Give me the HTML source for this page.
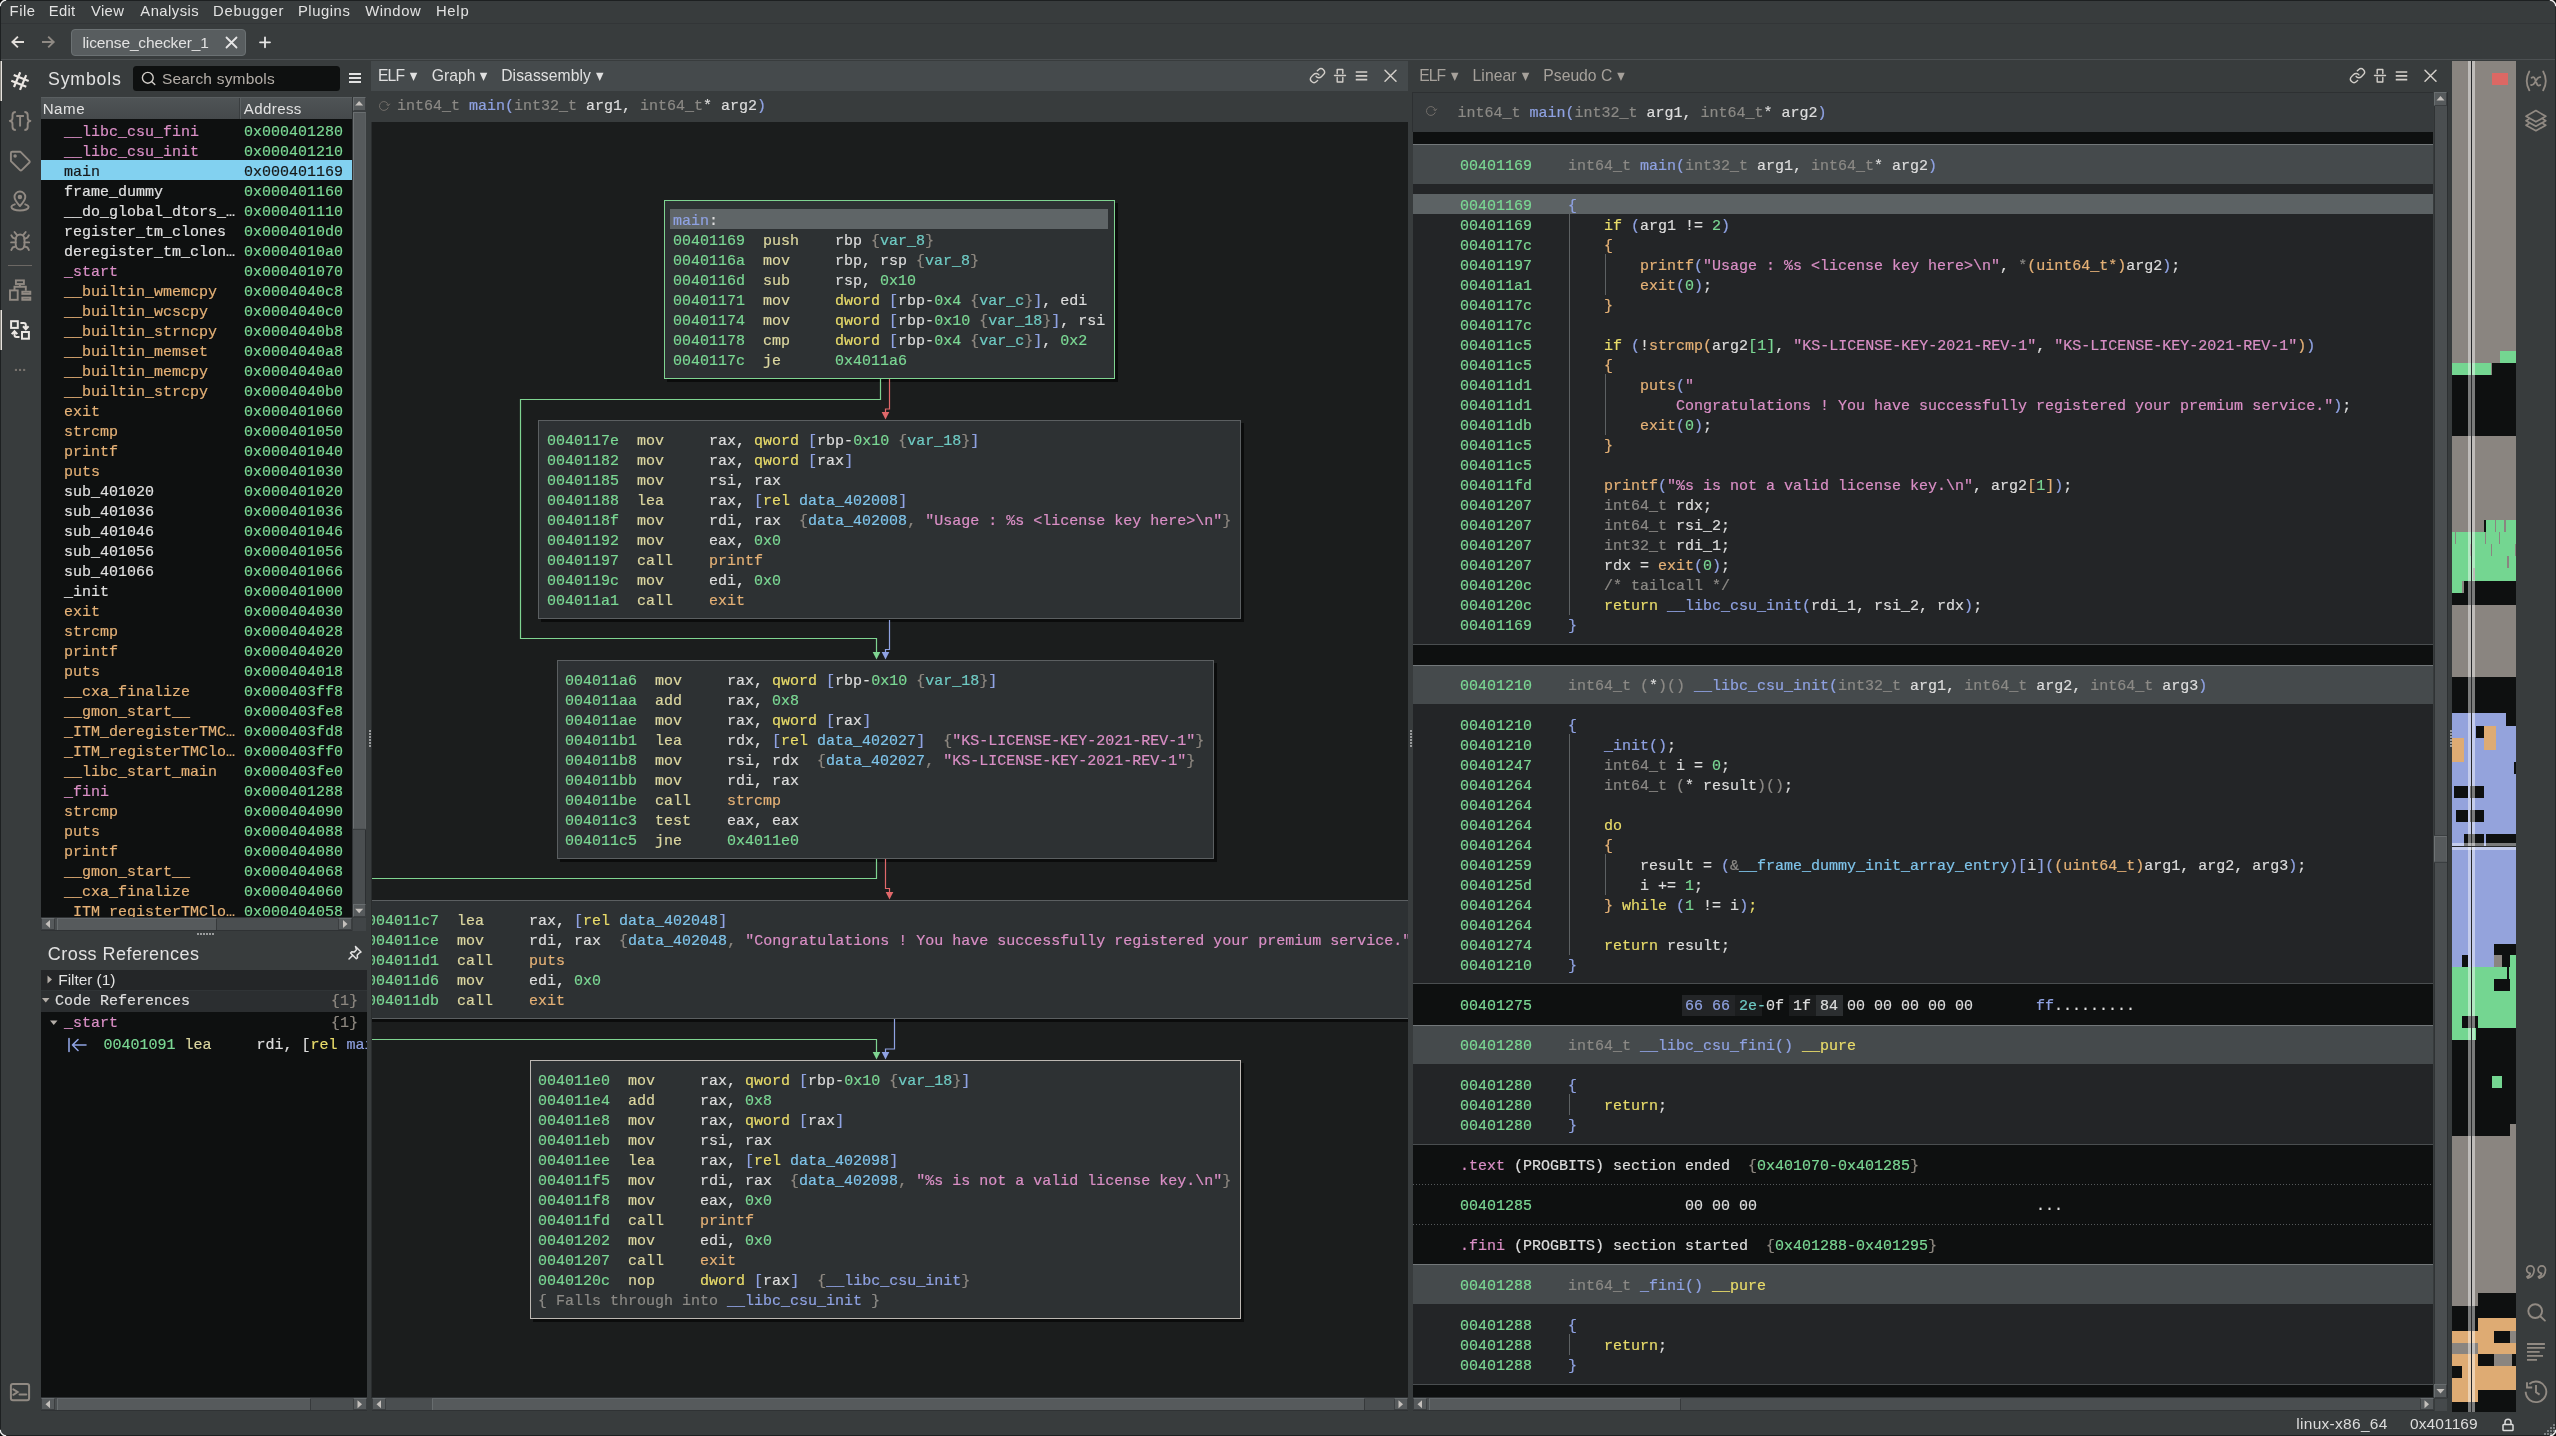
<!DOCTYPE html>
<html lang="en"><head><meta charset="utf-8"><title>license_checker_1 - Binary Ninja</title>
<style>
*{box-sizing:border-box;margin:0;padding:0}
html,body{width:2556px;height:1436px;overflow:hidden;background:#383c3d}
body{position:relative;will-change:transform;font-family:"Liberation Sans","DejaVu Sans",sans-serif;color:#dcdcdc;font-size:16px}
.abs{position:absolute}
.mono,.ln{font-family:"Liberation Mono","DejaVu Sans Mono",monospace;font-size:15px;white-space:pre;line-height:20px}
.ln{position:absolute;height:20px;color:#dddddd;margin-top:2.5px;-webkit-text-stroke:0.2px}
.a{color:#7bd894}.m{color:#dcd7a0}.k{color:#e9dc6a}.b{color:#8fa2e2}.g{color:#8e8880}
.v{color:#6fcbc4}.d{color:#7fc4ea}.s{color:#da8fc6}.i{color:#e5b176}.f{color:#8fa2e2}
.t{color:#8c8a86}.o{color:#e5b176}.gr{color:#7bd894}.c{color:#8c8a86}.w{color:#e0e0e0}.p{color:#da8fc6}
.sb{position:absolute;background:#55595b;border:1px solid #2e3133}
.sbt{position:absolute;background:#575b5d;border:1px solid #45494b}
svg{position:absolute;overflow:visible}
</style></head>
<body>
<!-- menu bar -->
<div class="abs" style="left:0;top:0;width:2556px;height:23px;background:#383c3d"></div>
<div class="abs" style="left:0;top:23px;width:2556px;height:1px;background:#323537"></div>
<div class="abs" style="left:9.58px;top:0.57px;font-size:14.8px;line-height:20px;color:#e2e2e2;white-space:nowrap;letter-spacing:0.541px;">File</div>
<div class="abs" style="left:48.68px;top:0.57px;font-size:14.8px;line-height:20px;color:#e2e2e2;white-space:nowrap;letter-spacing:0.346px;">Edit</div>
<div class="abs" style="left:90.93px;top:0.57px;font-size:14.8px;line-height:20px;color:#e2e2e2;white-space:nowrap;letter-spacing:0.372px;">View</div>
<div class="abs" style="left:140.36px;top:0.57px;font-size:14.8px;line-height:20px;color:#e2e2e2;white-space:nowrap;letter-spacing:0.452px;">Analysis</div>
<div class="abs" style="left:212.98px;top:0.57px;font-size:14.8px;line-height:20px;color:#e2e2e2;white-space:nowrap;letter-spacing:0.776px;">Debugger</div>
<div class="abs" style="left:297.88px;top:0.57px;font-size:14.8px;line-height:20px;color:#e2e2e2;white-space:nowrap;letter-spacing:0.566px;">Plugins</div>
<div class="abs" style="left:365.13px;top:0.57px;font-size:14.8px;line-height:20px;color:#e2e2e2;white-space:nowrap;letter-spacing:0.577px;">Window</div>
<div class="abs" style="left:435.88px;top:0.57px;font-size:14.8px;line-height:20px;color:#e2e2e2;white-space:nowrap;letter-spacing:0.766px;">Help</div>
<!-- tab bar -->
<div class="abs" style="left:0;top:59px;width:2556px;height:1px;background:#4c5052"></div>
<div class="abs" style="left:71px;top:29px;width:175px;height:27px;background:#585d5f;border:1px solid #6b7173;border-radius:4px"></div>
<div class="abs" style="left:82.55px;top:32.53px;font-size:15.5px;line-height:20px;color:#e2e2e2;white-space:nowrap;letter-spacing:-0.131px;">license_checker_1</div>
<svg style="left:0;top:24px" width="300" height="36" viewBox="0 24 300 36" fill="none" stroke-linecap="round" stroke-linejoin="round"><path d="M24 42H12.800M17.900 36.600l-5.500 5.400 5.500 5.400" stroke="#e2deda" stroke-width="1.900" stroke-linecap="butt" stroke-linejoin="miter"/><path d="M42 42h11.200M48.200 36.600l5.500 5.400-5.500 5.400" stroke="#8f8a84" stroke-width="1.900" stroke-linecap="butt" stroke-linejoin="miter"/><path d="M226.5 37.5l10 10M236.5 37.5l-10 10" stroke="#e6e6e6" stroke-width="1.8"/><path d="M260 42.3h10M265 37.3v10" stroke="#e6e6e6" stroke-width="1.8"/></svg>
<!-- left icon strip -->
<div class="abs" style="left:0;top:61px;width:2px;height:40px;background:#e8e4e0;border-left:1px solid #8a8882;z-index:3"></div>
<div class="abs" style="left:0;top:310px;width:2px;height:40px;background:#e8e4e0;border-left:1px solid #8a8882;z-index:3"></div>
<div class="abs" style="left:8px;top:265px;width:24px;height:1px;background:#6c6864"></div>
<svg style="left:0;top:60px" width="41" height="1353" viewBox="0 60 41 1353" fill="none" stroke-linecap="round" stroke-linejoin="round">
<g stroke="#ebe7e3" stroke-width="2.200" stroke-linecap="butt"><path d="M13.700 74.900l15 6M11.300 80.800l15 6M20.200 72.200l-6.200 14.800M26.200 75.100l-6.200 14.800"/></g>
<g stroke="#918a83" stroke-width="1.900"><path d="M15.800 112c-2.600 0-3.300 .8-3.300 3v3c0 1.900-.9 2.800-2.700 3c1.800 .2 2.700 1.100 2.700 3v3c0 2.200 .7 3 3.300 3M24.400 112c2.600 0 3.300 .8 3.300 3v3c0 1.900 .9 2.800 2.700 3c-1.800 .2-2.700 1.100-2.700 3v3c0 2.200-.7 3-3.300 3M16.300 116h7.600M20.100 116v10.600" stroke-linecap="butt"/></g>
<g stroke="#918a83" stroke-width="1.900"><path d="M10.900 152.900a1.200 1.200 0 0 1 1.200-1.200h8.200l9.100 9.100a1.200 1.200 0 0 1 0 1.700l-7.700 7.700a1.200 1.200 0 0 1-1.700 0l-9.100-9.100z"/><circle cx="15.100" cy="156" r=".8" fill="#918a83"/></g>
<g stroke="#918a83" stroke-width="1.900"><path d="M19.900 206c-4-4.500-5.400-6.900-5.400-9.100a5.400 5.400 0 0 1 10.800 0c0 2.200-1.400 4.600-5.400 9.100z"/><circle cx="19.900" cy="196.900" r="1.300" fill="#918a83"/><path d="M14.800 204.300c-2.200 .6-3.400 1.600-3.400 2.700c0 2 3.800 3.500 8.600 3.500s8.600-1.500 8.600-3.500c0-1.100-1.200-2.100-3.400-2.700"/></g>
<g stroke="#918a83" stroke-width="1.900"><path d="M15.700 239.500a4.400 5 0 0 1 8.800 0v5a4.400 5 0 0 1-8.800 0z"/><path d="M15.700 242.400h-4.600M24.500 242.400h4.600M15.900 246.300l-3.200 1.200-1.400 2.400M24.300 246.300l3.200 1.200 1.400 2.400M15.900 238.800l-3.200-1.200-1.400-2.400M24.300 238.800l3.200-1.200 1.400-2.400M17 235.200l-2.500-3.200M23.200 235.200l2.500-3.200"/></g>
<g stroke="#918a83" stroke-width="1.900" stroke-linejoin="miter" stroke-linecap="butt"><rect x="15.900" y="280.400" width="8" height="3.600"/><rect x="10" y="290.400" width="7.700" height="9.400"/><rect x="22.300" y="291.700" width="8" height="2.200"/><rect x="22.300" y="297.600" width="8" height="2.200"/><path d="M19.900 284.900v2.700M14.500 290v-3.300h11.300v4"/></g>
<g stroke="#ebe7e3" stroke-width="2" stroke-linejoin="miter" stroke-linecap="butt"><rect x="11.100" y="321.200" width="6.700" height="6.700"/><rect x="22" y="332" width="6.900" height="6.700"/><path d="M20.400 322.900h3.400q2 0 2 2v4.500M23 326.300l2.800 2.900 2.800-2.900M19.500 336.900h-3q-2 0-2-2v-3.800M11.700 334.100l2.800-2.900 2.800 2.900"/></g>
<g fill="#77726d" stroke="none"><rect x="14.900" y="368.900" width="2.100" height="2.100"/><rect x="19" y="368.900" width="2.100" height="2.100"/><rect x="23.100" y="368.900" width="2.100" height="2.100"/></g>
<g stroke="#918a83" stroke-width="2"><rect x="10.900" y="1383.900" width="18.200" height="16.300" rx="2"/><path d="M13.300 1389.300l4.300 2.700-4.300 2.800M19.500 1394.600h6.800" stroke-linejoin="miter"/></g>
</svg>
<!-- right icon strip -->
<svg style="left:2516px;top:60px" width="40" height="1353" viewBox="2516 60 40 1353" fill="none" stroke-linecap="round" stroke-linejoin="round">
<g stroke="#918a83" stroke-width="1.800"><path d="M2529.300 71.500c-3.300 6-3.300 12.800 0 18.800M2543.200 71.500c3.300 6 3.300 12.800 0 18.800"/><path d="M2531.600 77.800c1.700-1.200 2.700-.6 3.400 1.200l1.900 4.800c.7 1.800 1.700 2.400 3.400 1.200M2540.300 77.200c-1.700-.3-2.600 .6-3.600 2.300l-2 3.200c-1 1.700-1.900 2.600-3.600 2.300"/></g>
<g stroke="#918a83" stroke-width="1.700" stroke-linejoin="round"><path d="M2535.900 110.600l9.900 5.700-9.900 5.500-9.900-5.500zM2528.600 119.300l-2.600 1.400 9.900 5.500 9.900-5.500-2.600-1.400M2528.600 123.800l-2.600 1.400 9.900 5.500 9.900-5.500-2.600-1.400"/></g>
<g stroke="#918a83" stroke-width="1.700"><path d="M2530.2 1273.300a3.700 3.700 0 1 1 3.900-3.700c0 4.300-2 7.300-6.300 8.500l-.8-1.300c2.300-1 3.300-2 3.200-3.500zM2541.6 1273.300a3.700 3.700 0 1 1 3.900-3.700c0 4.300-2 7.300-6.300 8.500l-.8-1.300c2.300-1 3.300-2 3.200-3.500z"/></g>
<g stroke="#918a83" stroke-width="1.900"><circle cx="2535.200" cy="1311.100" r="6.900"/><path d="M2540.300 1316.300l4.600 4.300"/></g>
<g stroke="#918a83" stroke-width="1.900" stroke-linecap="butt"><path d="M2527 1344h17.900M2527 1347.900h17.900M2527 1351.900h12.700M2527 1355.900h16M2527 1359.900h10"/></g>
<g stroke="#918a83" stroke-width="1.900" stroke-linecap="butt" stroke-linejoin="miter"><path d="M2525.700 1391.800a10.300 10.300 0 1 0 3.600-7.800"/><path d="M2527 1382.300v5.200h5.200M2536 1385v7.200l3.600 2.400"/></g>
</svg>
<div class="abs" style="left:2555px;top:0;width:1px;height:1436px;background:#25282a"></div>
<!-- status bar -->
<div class="abs" style="left:2296.25px;top:1414.43px;font-size:15.5px;line-height:20px;color:#dcdcdc;white-space:nowrap;letter-spacing:0.290px;">linux-x86_64</div>
<div class="abs" style="left:2410.02px;top:1414.43px;font-size:15.5px;line-height:20px;color:#dcdcdc;white-space:nowrap;letter-spacing:0.108px;">0x401169</div>
<svg style="left:2500px;top:1414px" width="16" height="20" viewBox="2500 1414 16 20" fill="none" stroke="#dcdcdc" stroke-width="1.500"><rect x="2503" y="1424.500" width="10" height="6" rx="0.800"/><path d="M2505 1424.500v-2.300a3 3 0 0 1 6 0v2.300"/></svg>
<div class="abs" style="left:0;top:0;width:1px;height:1436px;background:#1d2021"></div>
<div class="abs" style="left:0;top:1435px;width:2556px;height:1px;background:#1d2021"></div>
<div class="abs" style="left:0;top:0;width:2556px;height:1px;background:#1d2021;z-index:4"></div>
<svg style="left:0;top:0;z-index:5" width="2556" height="1436" viewBox="0 0 2556 1436"><g fill="#7b7f81"><rect x="2553" y="1424" width="2" height="2"/><rect x="2553" y="1427" width="2" height="2"/><rect x="2550" y="1427" width="2" height="2"/><rect x="2553" y="1430" width="2" height="2"/><rect x="2550" y="1430" width="2" height="2"/><rect x="2547" y="1430" width="2" height="2"/><rect x="2553" y="1433" width="2" height="2"/><rect x="2550" y="1433" width="2" height="2"/><rect x="2547" y="1433" width="2" height="2"/><rect x="2544" y="1433" width="2" height="2"/></g><g transform="translate(0 0) scale(1 1)"><path d="M0 0H6.500A6.500 6.500 0 0 0 0 6.500Z" fill="#0a0a0a"/><path d="M6.200 0.200A6 6 0 0 0 0.200 6.200" fill="none" stroke="#f2f2f2" stroke-width="1.300"/></g><g transform="translate(2556 0) scale(-1 1)"><path d="M0 0H6.500A6.500 6.500 0 0 0 0 6.500Z" fill="#0a0a0a"/><path d="M6.200 0.200A6 6 0 0 0 0.200 6.200" fill="none" stroke="#f2f2f2" stroke-width="1.300"/></g><g transform="translate(0 1436) scale(1 -1)"><path d="M0 0H6.500A6.500 6.500 0 0 0 0 6.500Z" fill="#0a0a0a"/><path d="M6.200 0.200A6 6 0 0 0 0.200 6.200" fill="none" stroke="#f2f2f2" stroke-width="1.300"/></g><g transform="translate(2556 1436) scale(-1 -1)"><path d="M0 0H6.500A6.500 6.500 0 0 0 0 6.500Z" fill="#0a0a0a"/><path d="M6.200 0.200A6 6 0 0 0 0.200 6.200" fill="none" stroke="#f2f2f2" stroke-width="1.300"/></g></svg>
<!-- symbols panel -->
<div class="abs" style="left:48.05px;top:68.83px;font-size:17.8px;line-height:20px;color:#e2e2e2;white-space:nowrap;letter-spacing:0.768px;">Symbols</div>
<div class="abs" style="left:133px;top:65.800px;width:207px;height:24.900px;background:#0e1010;border-radius:3.500px"></div>
<svg style="left:140px;top:68px" width="20" height="20" viewBox="140 68 20 20" fill="none" stroke="#d2cec9" stroke-width="1.400" stroke-linecap="round"><circle cx="147.800" cy="77.800" r="5.400"/><path d="M151.800 81.700l3 2.900"/></svg>
<div class="abs" style="left:161.90px;top:68.63px;font-size:15.5px;line-height:20px;color:#b4aea8;white-space:nowrap;letter-spacing:0.197px;">Search symbols</div>
<svg style="left:348px;top:70px" width="14" height="16" viewBox="348 70 14 16" stroke="#e2e2e2" stroke-width="1.900"><path d="M349 74h12M349 78h12M349 82h12"/></svg>
<div class="abs" style="left:41px;top:97px;width:311px;height:22px;background:linear-gradient(#4f5456,#45494b);border-top:1px solid #5a5f61"></div>
<div class="abs" style="left:239px;top:98px;width:1px;height:21px;background:#3a3e40"></div>
<div class="abs" style="left:240px;top:98px;width:1px;height:21px;background:#5c6163"></div>
<div class="abs" style="left:42.65px;top:98.77px;font-size:15.1px;line-height:20px;color:#e2e2e2;white-space:nowrap;letter-spacing:0.569px;">Name</div>
<div class="abs" style="left:243.86px;top:98.77px;font-size:15.1px;line-height:20px;color:#e2e2e2;white-space:nowrap;letter-spacing:0.348px;">Address</div>
<div class="abs" style="left:41px;top:119px;width:311px;height:798px;background:#0e1010;overflow:hidden">
<div class="ln p" style="left:23px;top:1px">__libc_csu_fini</div><div class="ln a" style="left:203px;top:1px">0x000401280</div>
<div class="ln p" style="left:23px;top:21px">__libc_csu_init</div><div class="ln a" style="left:203px;top:21px">0x000401210</div>
<div class="abs" style="left:0;top:41px;width:312px;height:20px;background:#82d1f0"></div><div class="ln" style="left:23px;top:41px;color:#16181a">main</div><div class="ln" style="left:203px;top:41px;color:#16181a">0x000401169</div>
<div class="ln w" style="left:23px;top:61px">frame_dummy</div><div class="ln a" style="left:203px;top:61px">0x000401160</div>
<div class="ln w" style="left:23px;top:81px">__do_global_dtors_…</div><div class="ln a" style="left:203px;top:81px">0x000401110</div>
<div class="ln w" style="left:23px;top:101px">register_tm_clones</div><div class="ln a" style="left:203px;top:101px">0x0004010d0</div>
<div class="ln w" style="left:23px;top:121px">deregister_tm_clon…</div><div class="ln a" style="left:203px;top:121px">0x0004010a0</div>
<div class="ln p" style="left:23px;top:141px">_start</div><div class="ln a" style="left:203px;top:141px">0x000401070</div>
<div class="ln i" style="left:23px;top:161px">__builtin_wmemcpy</div><div class="ln a" style="left:203px;top:161px">0x0004040c8</div>
<div class="ln i" style="left:23px;top:181px">__builtin_wcscpy</div><div class="ln a" style="left:203px;top:181px">0x0004040c0</div>
<div class="ln i" style="left:23px;top:201px">__builtin_strncpy</div><div class="ln a" style="left:203px;top:201px">0x0004040b8</div>
<div class="ln i" style="left:23px;top:221px">__builtin_memset</div><div class="ln a" style="left:203px;top:221px">0x0004040a8</div>
<div class="ln i" style="left:23px;top:241px">__builtin_memcpy</div><div class="ln a" style="left:203px;top:241px">0x0004040a0</div>
<div class="ln i" style="left:23px;top:261px">__builtin_strcpy</div><div class="ln a" style="left:203px;top:261px">0x0004040b0</div>
<div class="ln i" style="left:23px;top:281px">exit</div><div class="ln a" style="left:203px;top:281px">0x000401060</div>
<div class="ln i" style="left:23px;top:301px">strcmp</div><div class="ln a" style="left:203px;top:301px">0x000401050</div>
<div class="ln i" style="left:23px;top:321px">printf</div><div class="ln a" style="left:203px;top:321px">0x000401040</div>
<div class="ln i" style="left:23px;top:341px">puts</div><div class="ln a" style="left:203px;top:341px">0x000401030</div>
<div class="ln w" style="left:23px;top:361px">sub_401020</div><div class="ln a" style="left:203px;top:361px">0x000401020</div>
<div class="ln w" style="left:23px;top:381px">sub_401036</div><div class="ln a" style="left:203px;top:381px">0x000401036</div>
<div class="ln w" style="left:23px;top:401px">sub_401046</div><div class="ln a" style="left:203px;top:401px">0x000401046</div>
<div class="ln w" style="left:23px;top:421px">sub_401056</div><div class="ln a" style="left:203px;top:421px">0x000401056</div>
<div class="ln w" style="left:23px;top:441px">sub_401066</div><div class="ln a" style="left:203px;top:441px">0x000401066</div>
<div class="ln w" style="left:23px;top:461px">_init</div><div class="ln a" style="left:203px;top:461px">0x000401000</div>
<div class="ln i" style="left:23px;top:481px">exit</div><div class="ln a" style="left:203px;top:481px">0x000404030</div>
<div class="ln i" style="left:23px;top:501px">strcmp</div><div class="ln a" style="left:203px;top:501px">0x000404028</div>
<div class="ln i" style="left:23px;top:521px">printf</div><div class="ln a" style="left:203px;top:521px">0x000404020</div>
<div class="ln i" style="left:23px;top:541px">puts</div><div class="ln a" style="left:203px;top:541px">0x000404018</div>
<div class="ln i" style="left:23px;top:561px">__cxa_finalize</div><div class="ln a" style="left:203px;top:561px">0x000403ff8</div>
<div class="ln i" style="left:23px;top:581px">__gmon_start__</div><div class="ln a" style="left:203px;top:581px">0x000403fe8</div>
<div class="ln i" style="left:23px;top:601px">_ITM_deregisterTMC…</div><div class="ln a" style="left:203px;top:601px">0x000403fd8</div>
<div class="ln i" style="left:23px;top:621px">_ITM_registerTMClo…</div><div class="ln a" style="left:203px;top:621px">0x000403ff0</div>
<div class="ln i" style="left:23px;top:641px">__libc_start_main</div><div class="ln a" style="left:203px;top:641px">0x000403fe0</div>
<div class="ln p" style="left:23px;top:661px">_fini</div><div class="ln a" style="left:203px;top:661px">0x000401288</div>
<div class="ln i" style="left:23px;top:681px">strcmp</div><div class="ln a" style="left:203px;top:681px">0x000404090</div>
<div class="ln i" style="left:23px;top:701px">puts</div><div class="ln a" style="left:203px;top:701px">0x000404088</div>
<div class="ln i" style="left:23px;top:721px">printf</div><div class="ln a" style="left:203px;top:721px">0x000404080</div>
<div class="ln i" style="left:23px;top:741px">__gmon_start__</div><div class="ln a" style="left:203px;top:741px">0x000404068</div>
<div class="ln i" style="left:23px;top:761px">__cxa_finalize</div><div class="ln a" style="left:203px;top:761px">0x000404060</div>
<div class="ln i" style="left:23px;top:781px">_ITM_registerTMClo…</div><div class="ln a" style="left:203px;top:781px">0x000404058</div>
</div>
<div class="abs" style="left:352px;top:97px;width:14.3px;height:820.2px;background:#4a4e50;border-left:1px solid #303335;border-right:1px solid #2c2f31"></div>
<div class="abs" style="left:352.8px;top:111.5px;width:12.9px;height:717px;background:#565a5c;border-left:1px solid #6e7274;border-right:1px solid #5c6062;border-top:1px solid #6a6e70;border-bottom:1px solid #505456;box-shadow:0 -1px 0 #3a3e40,0 1px 0 #3a3e40"></div>
<div class="abs" style="left:352.8px;top:97px;width:12.9px;height:13.500px;background:#565a5c;border:1px solid #3b3e40;border-top-color:#686d6f;border-left-color:#686d6f"></div>
<svg style="left:0;top:0" width="1" height="1"><polygon points="359.15,101 355.15,105.5 363.15,105.5" fill="#c4c0bc"/></svg>
<div class="abs" style="left:352.8px;top:903.7px;width:12.9px;height:13.500px;background:#565a5c;border:1px solid #3b3e40;border-top-color:#686d6f;border-left-color:#686d6f"></div>
<svg style="left:0;top:0" width="1" height="1"><polygon points="359.15,913.2 355.15,908.7 363.15,908.7" fill="#c4c0bc"/></svg>
<div class="abs" style="left:41px;top:916.6px;width:311px;height:14.6px;background:#4a4e50;border-top:1px solid #2f3234;border-bottom:1px solid #2f3234"></div>
<div class="abs" style="left:56.5px;top:917.6px;width:160.5px;height:12.6px;background:#565a5c;border-left:1px solid #686d6f;border-right:1px solid #36393b;border-top:1px solid #62676a"></div>
<div class="abs" style="left:41px;top:917.6px;width:14px;height:12.6px;background:#565a5c;border:1px solid #3b3e40;border-top-color:#686d6f"></div>
<svg style="left:0;top:0" width="1" height="1"><polygon points="45.5,923.9 50,919.9 50,927.9" fill="#c4c0bc"/></svg>
<div class="abs" style="left:338px;top:917.6px;width:14px;height:12.6px;background:#565a5c;border:1px solid #3b3e40;border-top-color:#686d6f"></div>
<svg style="left:0;top:0" width="1" height="1"><polygon points="347.5,923.9 343,919.9 343,927.9" fill="#c4c0bc"/></svg>
<div class="abs" style="left:353px;top:917.600px;width:13px;height:13.400px;background:#414547"></div>
<div class="abs" style="left:197px;top:933px;width:17px;height:2px;background:repeating-linear-gradient(90deg,#9a9c9d 0 2px,transparent 2px 3px)"></div>
<div class="abs" style="left:369px;top:730px;width:2px;height:17px;background:repeating-linear-gradient(#9a9c9d 0 2px,transparent 2px 3px)"></div>
<div class="abs" style="left:1410px;top:730px;width:2px;height:17px;background:repeating-linear-gradient(#9a9c9d 0 2px,transparent 2px 3px)"></div>
<!-- cross references -->
<div class="abs" style="left:47.70px;top:943.56px;font-size:18px;line-height:20px;color:#e2e2e2;white-space:nowrap;letter-spacing:0.479px;">Cross References</div>
<svg style="left:346px;top:944px" width="18" height="18" viewBox="346 944 18 18" fill="none" stroke="#e2e2e2" stroke-width="1.500" stroke-linejoin="round" stroke-linecap="round"><path d="M355.500 946.500l5.500 5.500-1.500 .8-2.300 2.300 .3 2.500-1.200 1.200-5.800-5.800 1.200-1.200 2.500 .3 2.300-2.300zM352.500 955.500l-3.500 3.500"/></svg>
<div class="abs" style="left:41px;top:970px;width:325.500px;height:20px;background:#242628"></div>
<div class="abs" style="left:41px;top:990px;width:325.500px;height:22px;background:#2b2e30;border-top:1px solid #303436"></div>
<div class="abs" style="left:41px;top:1012px;width:325.500px;height:385px;background:#0e1010"></div>
<svg style="left:0;top:0" width="1" height="1"><polygon points="47.500,975.500 52,979.500 47.500,983.500" fill="#b4aea8"/><polygon points="42,998 49.500,998 45.750,1002.500" fill="#b4aea8"/><polygon points="50,1020.500 57.500,1020.500 53.750,1025" fill="#b4aea8"/></svg>
<div class="abs" style="left:58.32px;top:969.73px;font-size:15.5px;line-height:20px;color:#e2e2e2;white-space:nowrap;letter-spacing:-0.066px;">Filter (1)</div>
<div class="ln" style="left:55px;top:989.500px">Code References</div><div class="ln g" style="left:331px;top:989.500px">{1}</div>
<div class="ln p" style="left:64px;top:1011.500px">_start</div><div class="ln g" style="left:331px;top:1011.500px">{1}</div>
<svg style="left:66px;top:1036px" width="22" height="18" viewBox="66 1036 22 18" fill="none" stroke="#8fa2e2" stroke-width="1.600" stroke-linecap="round" stroke-linejoin="round"><path d="M69 1038.500v13M86 1045H72.500M78 1039.500l-5.500 5.500 5.500 5.500"/></svg>
<div class="abs" style="left:41px;top:1034px;width:325.500px;height:22px;overflow:hidden"><div class="ln" style="left:62.500px;top:-0.500px"><span class="a">00401091</span> <span class="m">lea</span>     rdi, [<span class="k">rel</span> <span class="f">main</span><span class="b">]</span></div></div>
<div class="abs" style="left:41px;top:1397.2px;width:325.5px;height:14.2px;background:#4a4e50;border-top:1px solid #2f3234;border-bottom:1px solid #2f3234"></div>
<div class="abs" style="left:56.5px;top:1398.2px;width:254.5px;height:12.2px;background:#565a5c;border-left:1px solid #686d6f;border-right:1px solid #36393b;border-top:1px solid #62676a"></div>
<div class="abs" style="left:41px;top:1398.2px;width:14px;height:12.2px;background:#565a5c;border:1px solid #3b3e40;border-top-color:#686d6f"></div>
<svg style="left:0;top:0" width="1" height="1"><polygon points="45.5,1404.3 50,1400.3 50,1408.3" fill="#c4c0bc"/></svg>
<div class="abs" style="left:352.5px;top:1398.2px;width:14px;height:12.2px;background:#565a5c;border:1px solid #3b3e40;border-top-color:#686d6f"></div>
<svg style="left:0;top:0" width="1" height="1"><polygon points="362,1404.3 357.5,1400.3 357.5,1408.3" fill="#c4c0bc"/></svg>
<!-- graph pane -->
<div class="abs" style="left:371px;top:61px;width:1036.5px;height:29.700px;background:#454a4c"></div>
<div class="abs" style="left:378.10px;top:65.66px;font-size:15.7px;line-height:20px;color:#e0e0e0;white-space:nowrap;letter-spacing:-0.943px;">ELF</div>
<div class="abs" style="left:431.81px;top:65.66px;font-size:15.7px;line-height:20px;color:#e0e0e0;white-space:nowrap;letter-spacing:0.015px;">Graph</div>
<div class="abs" style="left:501.20px;top:65.66px;font-size:15.7px;line-height:20px;color:#e0e0e0;white-space:nowrap;letter-spacing:0.085px;">Disassembly</div>
<svg style="left:0;top:62px" width="1" height="1" viewBox="0 62 1 1" fill="#e0e0e0"><polygon points="409.8,72.800 417.3,72.800 413.55,80.900"/><polygon points="479.8,72.800 487.3,72.800 483.55,80.900"/><polygon points="596,72.800 603.5,72.800 599.75,80.900"/></svg>
<svg style="left:0;top:62px" width="1" height="1" viewBox="0 62 1 1" fill="none" stroke="#d2cec9" stroke-width="1.400" stroke-linecap="round" stroke-linejoin="round"><g transform="translate(1309.1 67.200) scale(0.700)" stroke-width="2"><path d="M10 13a5 5 0 0 0 7.540 .540l3-3a5 5 0 0 0-7.070-7.070l-1.720 1.710"/><path d="M14 11a5 5 0 0 0-7.540-.540l-3 3a5 5 0 0 0 7.070 7.070l1.710-1.710"/></g><path d="M1337.2 69.500h5.600v4M1337.2 73.500v-4M1334.5 75.500h11M1337.2 77.500v4.500h5.600v-4.500"/><path d="M1355.75 72h11.500M1355.75 75.800h11.500M1355.75 79.600h11.500" stroke-width="1.700" stroke-linecap="butt"/><path d="M1385 70.300l11 11M1396 70.300l-11 11" stroke-width="1.500"/></svg>
<svg style="left:376.5px;top:99px" width="14" height="14" viewBox="-7 -7 14 14" fill="none" stroke="#716d69" stroke-width="1" stroke-linecap="round" stroke-linejoin="round"><path d="M4.400 -0.800a4.500 4.500 0 1 0 -.3 2.600M2.800 -1.200l1.700 .8l1.200 -1.600"/></svg>
<div class="ln" style="left:397px;top:94.700px"><span class="t">int64_t</span> <span class="f">main(</span><span class="t">int32_t</span> arg1, <span class="t">int64_t</span>* arg2<span class="f">)</span></div>
<div class="abs" style="left:371px;top:122px;width:1px;height:1276px;background:#2a2d2e"></div>
<div class="abs" id="graph" style="left:372px;top:122px;width:1035.500px;height:1275.500px;background:#1b1d1d;overflow:hidden">
<div class="abs" style="left:292px;top:78px;width:451px;height:179px;background:#2d3133;border:1px solid #7fd491;box-shadow:3px 3px 0 #0b0c0c"></div>
<div class="abs" style="left:298px;top:87.1px;width:438px;height:19.700px;background:#5f6567"></div><div class="ln" style="left:301px;top:87px"><span class="f">main</span>:</div>
<div class="ln" style="left:301px;top:107px"><span class="a">00401169</span>  <span class="m">push</span>    rbp <span class="g">{</span><span class="v">var_8</span><span class="g">}</span></div>
<div class="ln" style="left:301px;top:127px"><span class="a">0040116a</span>  <span class="m">mov</span>     rbp, rsp <span class="g">{</span><span class="v">var_8</span><span class="g">}</span></div>
<div class="ln" style="left:301px;top:147px"><span class="a">0040116d</span>  <span class="m">sub</span>     rsp, <span class="a">0x10</span></div>
<div class="ln" style="left:301px;top:167px"><span class="a">00401171</span>  <span class="m">mov</span>     <span class="k">dword</span> <span class="b">[</span>rbp-<span class="a">0x4</span> <span class="g">{</span><span class="v">var_c</span><span class="g">}</span><span class="b">]</span>, edi</div>
<div class="ln" style="left:301px;top:187px"><span class="a">00401174</span>  <span class="m">mov</span>     <span class="k">qword</span> <span class="b">[</span>rbp-<span class="a">0x10</span> <span class="g">{</span><span class="v">var_18</span><span class="g">}</span><span class="b">]</span>, rsi</div>
<div class="ln" style="left:301px;top:207px"><span class="a">00401178</span>  <span class="m">cmp</span>     <span class="k">dword</span> <span class="b">[</span>rbp-<span class="a">0x4</span> <span class="g">{</span><span class="v">var_c</span><span class="g">}</span><span class="b">]</span>, <span class="a">0x2</span></div>
<div class="ln" style="left:301px;top:227px"><span class="a">0040117c</span>  <span class="m">je</span>      <span class="a">0x4011a6</span></div>
<div class="abs" style="left:166px;top:298px;width:703px;height:199px;background:#2d3133;border:1px solid #5b5f61;box-shadow:3px 3px 0 #0b0c0c"></div>
<div class="ln" style="left:175px;top:307px"><span class="a">0040117e</span>  <span class="m">mov</span>     rax, <span class="k">qword</span> <span class="b">[</span>rbp-<span class="a">0x10</span> <span class="g">{</span><span class="v">var_18</span><span class="g">}</span><span class="b">]</span></div>
<div class="ln" style="left:175px;top:327px"><span class="a">00401182</span>  <span class="m">mov</span>     rax, <span class="k">qword</span> <span class="b">[</span>rax<span class="b">]</span></div>
<div class="ln" style="left:175px;top:347px"><span class="a">00401185</span>  <span class="m">mov</span>     rsi, rax</div>
<div class="ln" style="left:175px;top:367px"><span class="a">00401188</span>  <span class="m">lea</span>     rax, <span class="b">[</span><span class="k">rel</span> <span class="d">data_402008</span><span class="b">]</span></div>
<div class="ln" style="left:175px;top:387px"><span class="a">0040118f</span>  <span class="m">mov</span>     rdi, rax  <span class="g">{</span><span class="d">data_402008</span><span class="g">,</span> <span class="s">"Usage : %s &lt;license key here&gt;\n"</span><span class="g">}</span></div>
<div class="ln" style="left:175px;top:407px"><span class="a">00401192</span>  <span class="m">mov</span>     eax, <span class="a">0x0</span></div>
<div class="ln" style="left:175px;top:427px"><span class="a">00401197</span>  <span class="m">call</span>    <span class="i">printf</span></div>
<div class="ln" style="left:175px;top:447px"><span class="a">0040119c</span>  <span class="m">mov</span>     edi, <span class="a">0x0</span></div>
<div class="ln" style="left:175px;top:467px"><span class="a">004011a1</span>  <span class="m">call</span>    <span class="i">exit</span></div>
<div class="abs" style="left:184.5px;top:538px;width:657px;height:198.5px;background:#2d3133;border:1px solid #5b5f61;box-shadow:3px 3px 0 #0b0c0c"></div>
<div class="ln" style="left:193px;top:547px"><span class="a">004011a6</span>  <span class="m">mov</span>     rax, <span class="k">qword</span> <span class="b">[</span>rbp-<span class="a">0x10</span> <span class="g">{</span><span class="v">var_18</span><span class="g">}</span><span class="b">]</span></div>
<div class="ln" style="left:193px;top:567px"><span class="a">004011aa</span>  <span class="m">add</span>     rax, <span class="a">0x8</span></div>
<div class="ln" style="left:193px;top:587px"><span class="a">004011ae</span>  <span class="m">mov</span>     rax, <span class="k">qword</span> <span class="b">[</span>rax<span class="b">]</span></div>
<div class="ln" style="left:193px;top:607px"><span class="a">004011b1</span>  <span class="m">lea</span>     rdx, <span class="b">[</span><span class="k">rel</span> <span class="d">data_402027</span><span class="b">]</span>  <span class="g">{</span><span class="s">"KS-LICENSE-KEY-2021-REV-1"</span><span class="g">}</span></div>
<div class="ln" style="left:193px;top:627px"><span class="a">004011b8</span>  <span class="m">mov</span>     rsi, rdx  <span class="g">{</span><span class="d">data_402027</span><span class="g">,</span> <span class="s">"KS-LICENSE-KEY-2021-REV-1"</span><span class="g">}</span></div>
<div class="ln" style="left:193px;top:647px"><span class="a">004011bb</span>  <span class="m">mov</span>     rdi, rax</div>
<div class="ln" style="left:193px;top:667px"><span class="a">004011be</span>  <span class="m">call</span>    <span class="i">strcmp</span></div>
<div class="ln" style="left:193px;top:687px"><span class="a">004011c3</span>  <span class="m">test</span>    eax, eax</div>
<div class="ln" style="left:193px;top:707px"><span class="a">004011c5</span>  <span class="m">jne</span>     <span class="a">0x4011e0</span></div>
<div class="abs" style="left:-32px;top:778px;width:1120px;height:118.5px;background:#2d3133;border:1px solid #5b5f61;box-shadow:3px 3px 0 #0b0c0c"></div>
<div class="ln" style="left:-5px;top:787px"><span class="a">004011c7</span>  <span class="m">lea</span>     rax, <span class="b">[</span><span class="k">rel</span> <span class="d">data_402048</span><span class="b">]</span></div>
<div class="ln" style="left:-5px;top:807px"><span class="a">004011ce</span>  <span class="m">mov</span>     rdi, rax  <span class="g">{</span><span class="d">data_402048</span><span class="g">,</span> <span class="s">"Congratulations ! You have successfully registered your premium service."</span><span class="g">}</span></div>
<div class="ln" style="left:-5px;top:827px"><span class="a">004011d1</span>  <span class="m">call</span>    <span class="i">puts</span></div>
<div class="ln" style="left:-5px;top:847px"><span class="a">004011d6</span>  <span class="m">mov</span>     edi, <span class="a">0x0</span></div>
<div class="ln" style="left:-5px;top:867px"><span class="a">004011db</span>  <span class="m">call</span>    <span class="i">exit</span></div>
<div class="abs" style="left:157.5px;top:938px;width:711.5px;height:258.5px;background:#2d3133;border:1px solid #bdb8b3;box-shadow:3px 3px 0 #0b0c0c"></div>
<div class="ln" style="left:166px;top:947px"><span class="a">004011e0</span>  <span class="m">mov</span>     rax, <span class="k">qword</span> <span class="b">[</span>rbp-<span class="a">0x10</span> <span class="g">{</span><span class="v">var_18</span><span class="g">}</span><span class="b">]</span></div>
<div class="ln" style="left:166px;top:967px"><span class="a">004011e4</span>  <span class="m">add</span>     rax, <span class="a">0x8</span></div>
<div class="ln" style="left:166px;top:987px"><span class="a">004011e8</span>  <span class="m">mov</span>     rax, <span class="k">qword</span> <span class="b">[</span>rax<span class="b">]</span></div>
<div class="ln" style="left:166px;top:1007px"><span class="a">004011eb</span>  <span class="m">mov</span>     rsi, rax</div>
<div class="ln" style="left:166px;top:1027px"><span class="a">004011ee</span>  <span class="m">lea</span>     rax, <span class="b">[</span><span class="k">rel</span> <span class="d">data_402098</span><span class="b">]</span></div>
<div class="ln" style="left:166px;top:1047px"><span class="a">004011f5</span>  <span class="m">mov</span>     rdi, rax  <span class="g">{</span><span class="d">data_402098</span><span class="g">,</span> <span class="s">"%s is not a valid license key.\n"</span><span class="g">}</span></div>
<div class="ln" style="left:166px;top:1067px"><span class="a">004011f8</span>  <span class="m">mov</span>     eax, <span class="a">0x0</span></div>
<div class="ln" style="left:166px;top:1087px"><span class="a">004011fd</span>  <span class="m">call</span>    <span class="i">printf</span></div>
<div class="ln" style="left:166px;top:1107px"><span class="a">00401202</span>  <span class="m">mov</span>     edi, <span class="a">0x0</span></div>
<div class="ln" style="left:166px;top:1127px"><span class="a">00401207</span>  <span class="m">call</span>    <span class="i">exit</span></div>
<div class="ln" style="left:166px;top:1147px"><span class="a">0040120c</span>  <span class="m">nop</span>     <span class="k">dword</span> <span class="b">[</span>rax<span class="b">]</span>  <span class="g">{</span><span class="f">__libc_csu_init</span><span class="g">}</span></div>
<div class="ln" style="left:166px;top:1167px"><span class="c">{ Falls through into </span><span class="f">__libc_csu_init</span><span class="c"> }</span></div>
<svg style="left:0;top:0" width="1036" height="1276" viewBox="372 122 1036 1276" fill="none" stroke-width="1.200" stroke-linejoin="miter">
<path d="M880.500 379V399.500H520.500V638.500H876.500V652" stroke="#7fd491"/><polygon points="872.7,652 880.3,652 876.5,659.5" fill="#7fd491" stroke="none"/><path d="M889.500 379V409H885.500V412" stroke="#e0686a"/><polygon points="881.7,412 889.3,412 885.5,419.5" fill="#e0686a" stroke="none"/><path d="M889.500 620V649.500H885.500V652" stroke="#8fa2e2"/><polygon points="881.7,652 889.3,652 885.5,659.5" fill="#8fa2e2" stroke="none"/><path d="M876.500 859V878.500H360" stroke="#7fd491"/><path d="M360 1039.500H876.500V1052" stroke="#7fd491"/><polygon points="872.7,1052 880.3,1052 876.5,1059.5" fill="#7fd491" stroke="none"/><path d="M885.500 859V888.500H889.500V892" stroke="#e0686a"/><polygon points="885.7,892 893.3,892 889.5,899.5" fill="#e0686a" stroke="none"/><path d="M894.500 1019V1049H885.500V1052" stroke="#8fa2e2"/><polygon points="881.7,1052 889.3,1052 885.5,1059.5" fill="#8fa2e2" stroke="none"/></svg>
</div>
<div class="abs" style="left:372px;top:1397.2px;width:1035.5px;height:14.2px;background:#4a4e50;border-top:1px solid #2f3234;border-bottom:1px solid #2f3234"></div>
<div class="abs" style="left:432px;top:1398.2px;width:933px;height:12.2px;background:#565a5c;border-left:1px solid #686d6f;border-right:1px solid #36393b;border-top:1px solid #62676a"></div>
<div class="abs" style="left:372px;top:1398.2px;width:14px;height:12.2px;background:#565a5c;border:1px solid #3b3e40;border-top-color:#686d6f"></div>
<svg style="left:0;top:0" width="1" height="1"><polygon points="376.5,1404.3 381,1400.3 381,1408.3" fill="#c4c0bc"/></svg>
<div class="abs" style="left:1393.5px;top:1398.2px;width:14px;height:12.2px;background:#565a5c;border:1px solid #3b3e40;border-top-color:#686d6f"></div>
<svg style="left:0;top:0" width="1" height="1"><polygon points="1403,1404.3 1398.5,1400.3 1398.5,1408.3" fill="#c4c0bc"/></svg>
<!-- linear pane -->
<div class="abs" style="left:1419.30px;top:65.66px;font-size:15.7px;line-height:20px;color:#a6a19b;white-space:nowrap;letter-spacing:-1.043px;">ELF</div>
<div class="abs" style="left:1472.50px;top:65.66px;font-size:15.7px;line-height:20px;color:#a6a19b;white-space:nowrap;letter-spacing:0.097px;">Linear</div>
<div class="abs" style="left:1543.30px;top:65.66px;font-size:15.7px;line-height:20px;color:#a6a19b;white-space:nowrap;letter-spacing:0.017px;">Pseudo C</div>
<svg style="left:0;top:62px" width="1" height="1" viewBox="0 62 1 1" fill="#a6a19b"><polygon points="1451,72.800 1458.5,72.800 1454.75,80.900"/><polygon points="1521.8,72.800 1529.3,72.800 1525.55,80.900"/><polygon points="1617.2,72.800 1624.7,72.800 1620.95,80.900"/></svg>
<svg style="left:0;top:62px" width="1" height="1" viewBox="0 62 1 1" fill="none" stroke="#d2cec9" stroke-width="1.400" stroke-linecap="round" stroke-linejoin="round"><g transform="translate(2349.1 67.200) scale(0.700)" stroke-width="2"><path d="M10 13a5 5 0 0 0 7.540 .540l3-3a5 5 0 0 0-7.070-7.070l-1.720 1.710"/><path d="M14 11a5 5 0 0 0-7.540-.540l-3 3a5 5 0 0 0 7.070 7.070l1.710-1.710"/></g><path d="M2377.2 69.500h5.600v4M2377.2 73.500v-4M2374.5 75.500h11M2377.2 77.500v4.500h5.600v-4.500"/><path d="M2395.75 72h11.500M2395.75 75.800h11.500M2395.75 79.600h11.500" stroke-width="1.700" stroke-linecap="butt"/><path d="M2425 70.300l11 11M2436 70.300l-11 11" stroke-width="1.500"/></svg>
<div class="abs" style="left:1412px;top:91.500px;width:1021.4px;height:40.500px;background:#373b3d;border-top:1px solid #2d3032;border-left:1px solid #2d3032"></div>
<svg style="left:1423.5px;top:104px" width="14" height="14" viewBox="-7 -7 14 14" fill="none" stroke="#716d69" stroke-width="1" stroke-linecap="round" stroke-linejoin="round"><path d="M4.400 -0.800a4.500 4.500 0 1 0 -.3 2.600M2.800 -1.200l1.700 .8l1.200 -1.600"/></svg>
<div class="ln" style="left:1457.500px;top:101px"><span class="t">int64_t</span> <span class="f">main(</span><span class="t">int32_t</span> arg1, <span class="t">int64_t</span>* arg2<span class="f">)</span></div>
<div class="abs" id="linear" style="left:1413px;top:132px;width:1020.4px;height:1265.500px;background:#0e1010;overflow:hidden">
<div class="abs" style="left:0;top:12px;width:1020.4px;height:39.5px;background:#454a4c;border-top:1px solid #73787a"></div>
<div class="ln" style="left:47px;top:22px"><span class="a">00401169</span></div>
<div class="ln" style="left:155px;top:22px"><span class="t">int64_t</span> <span class="f">main(</span><span class="t">int32_t</span> arg1, <span class="t">int64_t</span>* arg2<span class="f">)</span></div>
<div class="abs" style="left:0;top:51.5px;width:1020.4px;height:461px;background:#232527;border-bottom:1px solid #4a4e50"></div>
<div class="abs" style="left:0;top:62px;width:1020.4px;height:19.7px;background:#5c6264;"></div>
<div class="ln" style="left:47px;top:62px"><span class="a">00401169</span></div>
<div class="ln" style="left:155px;top:62px"><span class="f">{</span></div>
<div class="ln" style="left:47px;top:82px"><span class="a">00401169</span></div>
<div class="ln" style="left:155px;top:82px">    <span class="k">if</span> <span class="f">(</span>arg1 != <span class="a">2</span><span class="f">)</span></div>
<div class="ln" style="left:47px;top:102px"><span class="a">0040117c</span></div>
<div class="ln" style="left:155px;top:102px">    <span class="o">{</span></div>
<div class="ln" style="left:47px;top:122px"><span class="a">00401197</span></div>
<div class="ln" style="left:155px;top:122px">        <span class="i">printf</span><span class="f">(</span><span class="s">"Usage : %s &lt;license key here&gt;\n"</span>, <span class="t">*</span><span class="o">(uint64_t*)</span>arg2<span class="f">)</span>;</div>
<div class="ln" style="left:47px;top:142px"><span class="a">004011a1</span></div>
<div class="ln" style="left:155px;top:142px">        <span class="i">exit</span><span class="f">(</span><span class="a">0</span><span class="f">)</span>;</div>
<div class="ln" style="left:47px;top:162px"><span class="a">0040117c</span></div>
<div class="ln" style="left:155px;top:162px">    <span class="o">}</span></div>
<div class="ln" style="left:47px;top:182px"><span class="a">0040117c</span></div>
<div class="ln" style="left:47px;top:202px"><span class="a">004011c5</span></div>
<div class="ln" style="left:155px;top:202px">    <span class="k">if</span> <span class="f">(</span>!<span class="i">strcmp</span><span class="o">(</span>arg2<span class="gr">[</span><span class="a">1</span><span class="gr">]</span>, <span class="s">"KS-LICENSE-KEY-2021-REV-1"</span>, <span class="s">"KS-LICENSE-KEY-2021-REV-1"</span><span class="o">)</span><span class="f">)</span></div>
<div class="ln" style="left:47px;top:222px"><span class="a">004011c5</span></div>
<div class="ln" style="left:155px;top:222px">    <span class="o">{</span></div>
<div class="ln" style="left:47px;top:242px"><span class="a">004011d1</span></div>
<div class="ln" style="left:155px;top:242px">        <span class="i">puts</span><span class="f">(</span><span class="s">"</span></div>
<div class="ln" style="left:47px;top:262px"><span class="a">004011d1</span></div>
<div class="ln" style="left:155px;top:262px">            <span class="s">Congratulations ! You have successfully registered your premium service."</span><span class="f">)</span>;</div>
<div class="ln" style="left:47px;top:282px"><span class="a">004011db</span></div>
<div class="ln" style="left:155px;top:282px">        <span class="i">exit</span><span class="f">(</span><span class="a">0</span><span class="f">)</span>;</div>
<div class="ln" style="left:47px;top:302px"><span class="a">004011c5</span></div>
<div class="ln" style="left:155px;top:302px">    <span class="o">}</span></div>
<div class="ln" style="left:47px;top:322px"><span class="a">004011c5</span></div>
<div class="ln" style="left:47px;top:342px"><span class="a">004011fd</span></div>
<div class="ln" style="left:155px;top:342px">    <span class="i">printf</span><span class="f">(</span><span class="s">"%s is not a valid license key.\n"</span>, arg2<span class="o">[</span><span class="a">1</span><span class="o">]</span><span class="f">)</span>;</div>
<div class="ln" style="left:47px;top:362px"><span class="a">00401207</span></div>
<div class="ln" style="left:155px;top:362px">    <span class="t">int64_t</span> rdx;</div>
<div class="ln" style="left:47px;top:382px"><span class="a">00401207</span></div>
<div class="ln" style="left:155px;top:382px">    <span class="t">int64_t</span> rsi_2;</div>
<div class="ln" style="left:47px;top:402px"><span class="a">00401207</span></div>
<div class="ln" style="left:155px;top:402px">    <span class="t">int32_t</span> rdi_1;</div>
<div class="ln" style="left:47px;top:422px"><span class="a">00401207</span></div>
<div class="ln" style="left:155px;top:422px">    rdx = <span class="i">exit</span><span class="f">(</span><span class="a">0</span><span class="f">)</span>;</div>
<div class="ln" style="left:47px;top:442px"><span class="a">0040120c</span></div>
<div class="ln" style="left:155px;top:442px">    <span class="c">/* tailcall */</span></div>
<div class="ln" style="left:47px;top:462px"><span class="a">0040120c</span></div>
<div class="ln" style="left:155px;top:462px">    <span class="k">return</span> <span class="f">__libc_csu_init(</span>rdi_1, rsi_2, rdx<span class="f">)</span>;</div>
<div class="ln" style="left:47px;top:482px"><span class="a">00401169</span></div>
<div class="ln" style="left:155px;top:482px"><span class="f">}</span></div>
<div class="abs" style="left:156px;top:82px;width:1px;height:401px;background:#5d6163"></div>
<div class="abs" style="left:192px;top:122px;width:1px;height:41px;background:#5d6163"></div>
<div class="abs" style="left:192px;top:242px;width:1px;height:61px;background:#5d6163"></div>
<div class="abs" style="left:0;top:532.5px;width:1020.4px;height:39.5px;background:#454a4c;border-top:1px solid #73787a"></div>
<div class="ln" style="left:47px;top:542.5px"><span class="a">00401210</span></div>
<div class="ln" style="left:155px;top:542.5px"><span class="t">int64_t (</span>*<span class="t">)()</span> <span class="f">__libc_csu_init(</span><span class="t">int32_t</span> arg1, <span class="t">int64_t</span> arg2, <span class="t">int64_t</span> arg3<span class="f">)</span></div>
<div class="abs" style="left:0;top:572px;width:1020.4px;height:280px;background:#232527;border-bottom:1px solid #4a4e50"></div>
<div class="ln" style="left:47px;top:582px"><span class="a">00401210</span></div>
<div class="ln" style="left:155px;top:582px"><span class="f">{</span></div>
<div class="ln" style="left:47px;top:602px"><span class="a">00401210</span></div>
<div class="ln" style="left:155px;top:602px">    <span class="f">_init()</span>;</div>
<div class="ln" style="left:47px;top:622px"><span class="a">00401247</span></div>
<div class="ln" style="left:155px;top:622px">    <span class="t">int64_t</span> i = <span class="a">0</span>;</div>
<div class="ln" style="left:47px;top:642px"><span class="a">00401264</span></div>
<div class="ln" style="left:155px;top:642px">    <span class="t">int64_t (</span>* result<span class="t">)()</span>;</div>
<div class="ln" style="left:47px;top:662px"><span class="a">00401264</span></div>
<div class="ln" style="left:47px;top:682px"><span class="a">00401264</span></div>
<div class="ln" style="left:155px;top:682px">    <span class="k">do</span></div>
<div class="ln" style="left:47px;top:702px"><span class="a">00401264</span></div>
<div class="ln" style="left:155px;top:702px">    <span class="o">{</span></div>
<div class="ln" style="left:47px;top:722px"><span class="a">00401259</span></div>
<div class="ln" style="left:155px;top:722px">        result = <span class="f">(</span><span class="t">&amp;</span><span class="d">__frame_dummy_init_array_entry</span><span class="f">)[</span>i<span class="f">](</span><span class="o">(uint64_t)</span>arg1, arg2, arg3<span class="f">)</span>;</div>
<div class="ln" style="left:47px;top:742px"><span class="a">0040125d</span></div>
<div class="ln" style="left:155px;top:742px">        i += <span class="a">1</span>;</div>
<div class="ln" style="left:47px;top:762px"><span class="a">00401264</span></div>
<div class="ln" style="left:155px;top:762px">    <span class="o">}</span> <span class="k">while</span> <span class="f">(</span><span class="a">1</span> != i<span class="f">)</span><span class="k">;</span></div>
<div class="ln" style="left:47px;top:782px"><span class="a">00401264</span></div>
<div class="ln" style="left:47px;top:802px"><span class="a">00401274</span></div>
<div class="ln" style="left:155px;top:802px">    <span class="k">return</span> result;</div>
<div class="ln" style="left:47px;top:822px"><span class="a">00401210</span></div>
<div class="ln" style="left:155px;top:822px"><span class="f">}</span></div>
<div class="abs" style="left:156px;top:602px;width:1px;height:221px;background:#5d6163"></div>
<div class="abs" style="left:192px;top:722px;width:1px;height:41px;background:#5d6163"></div>
<div class="abs" style="left:0;top:852px;width:1020.4px;height:40.5px;background:#0e1010;"></div>
<div class="abs" style="left:268.5px;top:862.5px;width:53px;height:21px;background:#232527"></div><div class="abs" style="left:321.5px;top:862.5px;width:27.500px;height:21px;background:#1b1d1e"></div><div class="abs" style="left:375.5px;top:862.5px;width:27.500px;height:21px;background:#1b1d1e"></div><div class="abs" style="left:403px;top:862.5px;width:27px;height:21px;background:#2b2e30"></div>
<div class="ln" style="left:47px;top:862px"><span class="a">00401275</span></div>
<div class="ln" style="left:272px;top:862px"><span class="f">66 66</span> <span class="v">2e-</span>0f 1f 84 00 00 00 00 00</div>
<div class="ln" style="left:623px;top:862px"><span class="f">ff</span>.........</div>
<div class="abs" style="left:0;top:892.5px;width:1020.4px;height:39.5px;background:#454a4c;border-top:1px solid #73787a"></div>
<div class="ln" style="left:47px;top:902.5px"><span class="a">00401280</span></div>
<div class="ln" style="left:155px;top:902.5px"><span class="t">int64_t</span> <span class="f">__libc_csu_fini()</span> <span class="k">__pure</span></div>
<div class="abs" style="left:0;top:932px;width:1020.4px;height:81px;background:#232527;border-bottom:1px solid #4a4e50"></div>
<div class="ln" style="left:47px;top:942px"><span class="a">00401280</span></div>
<div class="ln" style="left:155px;top:942px"><span class="f">{</span></div>
<div class="ln" style="left:47px;top:962px"><span class="a">00401280</span></div>
<div class="ln" style="left:155px;top:962px">    <span class="k">return</span>;</div>
<div class="ln" style="left:47px;top:982px"><span class="a">00401280</span></div>
<div class="ln" style="left:155px;top:982px"><span class="f">}</span></div>
<div class="abs" style="left:156px;top:962px;width:1px;height:21px;background:#5d6163"></div>
<div class="ln" style="left:47px;top:1022px"><span class="p">.text</span> (PROGBITS) section ended  <span class="g">{</span><span class="a">0x401070-0x401285</span><span class="g">}</span></div>
<div class="abs" style="left:0;top:1052px;width:1020.4px;height:1px;background:repeating-linear-gradient(90deg,#55595b 0 1px,transparent 1px 3px)"></div>
<div class="ln" style="left:47px;top:1062px"><span class="a">00401285</span></div>
<div class="ln" style="left:272px;top:1062px">00 00 00</div>
<div class="ln" style="left:623px;top:1062px">...</div>
<div class="abs" style="left:0;top:1092px;width:1020.4px;height:1px;background:repeating-linear-gradient(90deg,#55595b 0 1px,transparent 1px 3px)"></div>
<div class="ln" style="left:47px;top:1102px"><span class="p">.fini</span> (PROGBITS) section started  <span class="g">{</span><span class="a">0x401288-0x401295</span><span class="g">}</span></div>
<div class="abs" style="left:0;top:1132px;width:1020.4px;height:40px;background:#454a4c;border-top:1px solid #73787a"></div>
<div class="ln" style="left:47px;top:1142.25px"><span class="a">00401288</span></div>
<div class="ln" style="left:155px;top:1142.25px"><span class="t">int64_t</span> <span class="f">_fini()</span> <span class="k">__pure</span></div>
<div class="abs" style="left:0;top:1172px;width:1020.4px;height:80.5px;background:#232527;border-bottom:1px solid #4a4e50"></div>
<div class="ln" style="left:47px;top:1182px"><span class="a">00401288</span></div>
<div class="ln" style="left:155px;top:1182px"><span class="f">{</span></div>
<div class="ln" style="left:47px;top:1202px"><span class="a">00401288</span></div>
<div class="ln" style="left:155px;top:1202px">    <span class="k">return</span>;</div>
<div class="ln" style="left:47px;top:1222px"><span class="a">00401288</span></div>
<div class="ln" style="left:155px;top:1222px"><span class="f">}</span></div>
<div class="abs" style="left:156px;top:1202px;width:1px;height:21px;background:#5d6163"></div>
</div>
<div class="abs" style="left:2433.5px;top:92px;width:14px;height:1305.5px;background:#4a4e50;border-left:1px solid #303335;border-right:1px solid #2c2f31"></div>
<div class="abs" style="left:2434.3px;top:836px;width:12.6px;height:26.2px;background:#565a5c;border-left:1px solid #6e7274;border-right:1px solid #5c6062;border-top:1px solid #6a6e70;border-bottom:1px solid #505456;box-shadow:0 -1px 0 #3a3e40,0 1px 0 #3a3e40"></div>
<div class="abs" style="left:2434.3px;top:92px;width:12.6px;height:13.500px;background:#565a5c;border:1px solid #3b3e40;border-top-color:#686d6f;border-left-color:#686d6f"></div>
<svg style="left:0;top:0" width="1" height="1"><polygon points="2440.5,96 2436.5,100.5 2444.5,100.5" fill="#c4c0bc"/></svg>
<div class="abs" style="left:2434.3px;top:1384px;width:12.6px;height:13.500px;background:#565a5c;border:1px solid #3b3e40;border-top-color:#686d6f;border-left-color:#686d6f"></div>
<svg style="left:0;top:0" width="1" height="1"><polygon points="2440.5,1393.5 2436.5,1389 2444.5,1389" fill="#c4c0bc"/></svg>
<div class="abs" style="left:1413px;top:1397.2px;width:1020.5px;height:14.2px;background:#4a4e50;border-top:1px solid #2f3234;border-bottom:1px solid #2f3234"></div>
<div class="abs" style="left:1429px;top:1398.2px;width:252px;height:12.2px;background:#565a5c;border-left:1px solid #686d6f;border-right:1px solid #36393b;border-top:1px solid #62676a"></div>
<div class="abs" style="left:1413px;top:1398.2px;width:14px;height:12.2px;background:#565a5c;border:1px solid #3b3e40;border-top-color:#686d6f"></div>
<svg style="left:0;top:0" width="1" height="1"><polygon points="1417.5,1404.3 1422,1400.3 1422,1408.3" fill="#c4c0bc"/></svg>
<div class="abs" style="left:2419.5px;top:1398.2px;width:14px;height:12.2px;background:#565a5c;border:1px solid #3b3e40;border-top-color:#686d6f"></div>
<svg style="left:0;top:0" width="1" height="1"><polygon points="2429,1404.3 2424.5,1400.3 2424.5,1408.3" fill="#c4c0bc"/></svg>
<div class="abs" style="left:2435px;top:1398.500px;width:12px;height:12px;background:#45494b"></div>
<!-- feature map -->
<svg style="left:2452px;top:61px" width="64" height="1350.5" viewBox="2452 61 64 1350.5" shape-rendering="crispEdges">
<rect x="2452" y="61" width="64" height="1350.5" fill="#8a8580"/><rect x="2492" y="73" width="16" height="12" fill="#dc6864"/><rect x="2500" y="351" width="16" height="12" fill="#74d691"/><rect x="2452" y="363" width="38.5" height="12" fill="#74d691"/><rect x="2492" y="363" width="24" height="12" fill="#0e1010"/><rect x="2452" y="375" width="64" height="60.5" fill="#0e1010"/><rect x="2486" y="520" width="30" height="12" fill="#74d691"/><rect x="2484" y="520" width="2" height="12" fill="#0e1010"/><rect x="2452" y="532" width="64" height="48.5" fill="#74d691"/><rect x="2452" y="580.5" width="10" height="12" fill="#74d691"/><rect x="2464" y="580.5" width="52" height="12" fill="#0e1010"/><rect x="2452" y="592.5" width="64" height="12" fill="#0e1010"/><rect x="2454.5" y="532" width="1.5" height="12" fill="#8a8580"/><rect x="2494.5" y="520" width="1.5" height="12" fill="#8a8580"/><rect x="2504" y="520" width="1.5" height="12" fill="#8a8580"/><rect x="2484.5" y="532" width="1.5" height="12" fill="#8a8580"/><rect x="2498.5" y="532" width="1.5" height="12" fill="#8a8580"/><rect x="2490.5" y="544" width="1.5" height="12" fill="#8a8580"/><rect x="2514.5" y="544" width="1.5" height="12" fill="#8a8580"/><rect x="2507" y="556" width="1.5" height="12" fill="#8a8580"/><rect x="2473" y="568" width="1.5" height="12" fill="#8a8580"/><rect x="2469.5" y="544" width="1.5" height="12" fill="#8a8580"/><rect x="2461.5" y="580.5" width="1.5" height="12" fill="#8a8580"/><rect x="2452" y="676.5" width="64" height="36" fill="#0e1010"/><rect x="2452" y="712.5" width="64" height="254.5" fill="#94a3dc"/><rect x="2506" y="712.5" width="10" height="13" fill="#0e1010"/><rect x="2476" y="725.5" width="8" height="12" fill="#0e1010"/><rect x="2484" y="725.5" width="12" height="24" fill="#deab73"/><rect x="2452" y="737.5" width="12" height="24" fill="#deab73"/><rect x="2514" y="762" width="2" height="11.5" fill="#0e1010"/><rect x="2454" y="786" width="30" height="11.5" fill="#0e1010"/><rect x="2456" y="810" width="28" height="12" fill="#0e1010"/><rect x="2468" y="786" width="2" height="36" fill="#94a3dc"/><rect x="2464" y="834" width="20" height="12" fill="#0e1010"/><rect x="2486" y="834" width="30" height="12" fill="#0e1010"/><rect x="2494" y="943.5" width="22" height="11.5" fill="#0e1010"/><rect x="2462" y="955" width="6" height="12" fill="#0e1010"/><rect x="2494" y="955" width="8" height="12" fill="#8a8580"/><rect x="2502" y="955" width="8" height="12" fill="#0e1010"/><rect x="2510" y="955" width="6" height="12" fill="#74d691"/><rect x="2452" y="967" width="64" height="61" fill="#74d691"/><rect x="2452" y="1028" width="24" height="12" fill="#74d691"/><rect x="2476" y="1028" width="40" height="12" fill="#0e1010"/><rect x="2506.5" y="967" width="2" height="11.5" fill="#0e1010"/><rect x="2494" y="978.5" width="16" height="12" fill="#0e1010"/><rect x="2462" y="1016" width="16" height="12" fill="#0e1010"/><rect x="2452" y="1040" width="64" height="96" fill="#0e1010"/><rect x="2492" y="1076" width="10" height="12" fill="#74d691"/><rect x="2510" y="1124" width="6" height="12" fill="#8a8580"/><rect x="2478" y="1293" width="38" height="25" fill="#0e1010"/><rect x="2452" y="1306" width="26" height="24.5" fill="#0e1010"/><rect x="2478" y="1318" width="38" height="12.5" fill="#deab73"/><rect x="2452" y="1330.5" width="42" height="12" fill="#deab73"/><rect x="2494" y="1330.5" width="16" height="12" fill="#0e1010"/><rect x="2478" y="1342.5" width="38" height="11.5" fill="#deab73"/><rect x="2452" y="1354" width="26" height="12" fill="#deab73"/><rect x="2478" y="1354" width="16" height="12" fill="#0e1010"/><rect x="2512" y="1354" width="4" height="12" fill="#0e1010"/><rect x="2452" y="1366" width="10" height="12" fill="#0e1010"/><rect x="2462" y="1366" width="54" height="12" fill="#deab73"/><rect x="2452" y="1378" width="64" height="12" fill="#deab73"/><rect x="2452" y="1390" width="26" height="12" fill="#deab73"/><rect x="2478" y="1390" width="38" height="12" fill="#0e1010"/><rect x="2452" y="1402" width="64" height="9.5" fill="#0e1010"/><rect x="2468" y="61" width="3" height="1350.500" fill="#fff" fill-opacity="0.45"/><rect x="2472" y="61" width="3" height="1350.500" fill="#fff" fill-opacity="0.45"/><rect x="2471" y="61" width="1" height="1350.500" fill="#26282a"/><rect x="2452" y="843" width="64" height="3" fill="#fff" fill-opacity="0.45"/><rect x="2452" y="847" width="64" height="3" fill="#fff" fill-opacity="0.45"/><rect x="2452" y="846" width="64" height="1" fill="#26282a"/></svg>
<div class="abs" style="left:2449.500px;top:730px;width:2px;height:17px;background:repeating-linear-gradient(#9a9c9d 0 2px,transparent 2px 3px)"></div>
</body></html>
